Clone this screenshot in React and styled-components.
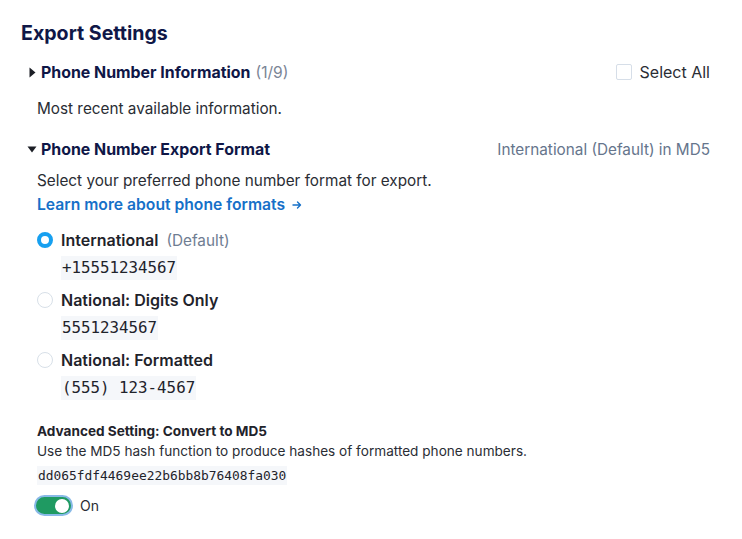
import React, { useState } from "react";
import styled, { createGlobalStyle, css } from "styled-components";

const Global = createGlobalStyle`
  html, body { margin: 0; padding: 0; background: #ffffff; }
  body { font-family: Inter, "Noto Sans", "Liberation Sans", sans-serif; color: #2a2d34; }
  * { box-sizing: border-box; }
`;

const Page = styled.div`
  width: 742px;
  padding: 21px 32px 20px 21px;
  display: flex;
  flex-direction: column;
`;

const Title = styled.h1`
  margin: 0;
  font-size: 19.6px;
  line-height: 24px;
  font-weight: 700;
  color: #0f1747;
`;

const SectionHeader = styled.div`
  display: flex;
  align-items: center;
  height: 24px;
  margin-top: ${(p) => p.$mt || 0}px;
`;

const Caret = styled.span`
  width: 20px;
  display: flex;
  align-items: center;
  justify-content: center;
  padding-left: 2px;
  color: #1c1f26;
`;

const HeaderTitle = styled.span`
  font-size: 15.9px;
  font-weight: 700;
  color: #0f1747;
`;

const Count = styled.span`
  font-size: 15.6px;
  color: #7b8596;
  margin-left: 5px;
`;

const Spacer = styled.div`
  flex: 1;
`;

const Meta = styled.span`
  font-size: 15.3px;
  color: #66758c;
`;

const CheckLabel = styled.label`
  display: flex;
  align-items: center;
  gap: 8px;
  font-size: 16px;
  color: #2a2d34;
`;

const CheckBox = styled.span`
  width: 16px;
  height: 16px;
  border: 1.5px solid #d6dee8;
  border-radius: 2px;
  background: #fff;
`;

const Body = styled.div`
  padding-left: 16px;
  display: flex;
  flex-direction: column;
  margin-top: ${(p) => p.$mt || 0}px;
`;

const Text = styled.p`
  margin: 0;
  font-size: 15.3px;
  line-height: 23px;
  color: #2a2d34;
`;

const LinkRow = styled.div`
  margin-top: 1px;
  line-height: 23px;
`;

const Link = styled.a`
  font-size: 15.7px;
  line-height: 23px;
  font-weight: 600;
  color: #1670c8;
  text-decoration: none;
  display: inline-flex;
  align-items: center;
  gap: 7px;
`;

const Options = styled.div`
  display: flex;
  flex-direction: column;
  gap: 8px;
  margin-top: 12px;
`;

const Option = styled.div`
  display: flex;
  flex-direction: column;
  gap: 4px;
`;

const OptionRow = styled.div`
  display: flex;
  align-items: center;
  height: 24px;
  gap: 8px;
`;

const Radio = styled.span`
  width: 16px;
  height: 16px;
  border-radius: 50%;
  flex: none;
  ${(p) =>
    p.$checked
      ? css`
          background: #fff;
          border: 4.5px solid #17a0f0;
        `
      : css`
          border: 1.5px solid #d8e0e8;
          background: #fff;
        `}
`;

const OptionLabel = styled.span`
  font-size: 16px;
  font-weight: 600;
  color: #1f232b;
`;

const Hint = styled.span`
  font-size: 15.3px;
  color: #6f7d92;
`;

const Code = styled.code`
  align-self: flex-start;
  margin-left: ${(p) => (p.$indent ? 24 : 0)}px;
  margin-top: ${(p) => p.$mt || 0}px;
  font-family: "DejaVu Sans Mono", "Liberation Mono", monospace;
  font-size: ${(p) => p.$size || 15.8}px;
  line-height: ${(p) => p.$lh || 24}px;
  background: #f5f7fa;
  padding: 0 1px;
  color: #1f232b;
`;

const Advanced = styled.div`
  display: flex;
  flex-direction: column;
  margin-top: 21px;
`;

const AdvTitle = styled.div`
  font-size: 13.6px;
  line-height: 20px;
  font-weight: 700;
  color: #1f232b;
`;

const AdvText = styled.div`
  font-size: 13.6px;
  line-height: 21px;
  color: #2a2d34;
`;

const ToggleRow = styled.div`
  display: flex;
  align-items: center;
  gap: 7px;
  margin-top: 10px;
`;

const Toggle = styled.button`
  position: relative;
  width: 39px;
  height: 21px;
  border-radius: 11px;
  border: 2.5px solid #88b9e7;
  background: #1f9a62;
  padding: 0;
  margin-left: -3px;
  cursor: pointer;
`;

const Knob = styled.span`
  position: absolute;
  top: 1.5px;
  right: 2px;
  width: 14px;
  height: 14px;
  border-radius: 50%;
  background: #fff;
`;

const ToggleLabel = styled.span`
  font-size: 14px;
  color: #2a2d34;
`;

const RightTri = () => (
  <svg width="7" height="11" viewBox="0 0 7 11">
    <path d="M0.5 0.5 L6.5 5.5 L0.5 10.5 Z" fill="currentColor" />
  </svg>
);
const DownTri = () => (
  <svg width="10" height="7" viewBox="0 0 10 7">
    <path d="M0.5 0.5 L9.5 0.5 L5 6.5 Z" fill="currentColor" />
  </svg>
);
const Arrow = () => (
  <svg width="10" height="10" viewBox="0 0 10 10">
    <path d="M1 5 H8.5 M5.5 2 L8.5 5 L5.5 8" fill="none" stroke="currentColor" strokeWidth="1.4" strokeLinecap="round" strokeLinejoin="round" />
  </svg>
);

const options = [
  { label: "International", hint: "(Default)", code: "+15551234567", checked: true },
  { label: "National: Digits Only", code: "5551234567" },
  { label: "National: Formatted", code: "(555) 123-4567" },
];

export default function App() {
  const [on, setOn] = useState(true);
  return (
    <Page>
      <Global />
      <Title>Export Settings</Title>

      <SectionHeader $mt={15}>
        <Caret><RightTri /></Caret>
        <HeaderTitle>Phone Number Information</HeaderTitle>
        <Count>(1/9)</Count>
        <Spacer />
        <CheckLabel>
          <CheckBox />
          Select All
        </CheckLabel>
      </SectionHeader>
      <Body $mt={13}>
        <Text>Most recent available information.</Text>
      </Body>

      <SectionHeader $mt={17}>
        <Caret><DownTri /></Caret>
        <HeaderTitle>Phone Number Export Format</HeaderTitle>
        <Spacer />
        <Meta>International (Default) in MD5</Meta>
      </SectionHeader>
      <Body $mt={8}>
        <Text>Select your preferred phone number format for export.</Text>
        <LinkRow>
          <Link href="#">Learn more about phone formats <Arrow /></Link>
        </LinkRow>
        <Options>
          {options.map((o) => (
            <Option key={o.label}>
              <OptionRow>
                <Radio $checked={o.checked} />
                <OptionLabel>{o.label}</OptionLabel>
                {o.hint && <Hint>{o.hint}</Hint>}
              </OptionRow>
              <Code $indent>{o.code}</Code>
            </Option>
          ))}
        </Options>
        <Advanced>
          <AdvTitle>Advanced Setting: Convert to MD5</AdvTitle>
          <AdvText>Use the MD5 hash function to produce hashes of formatted phone numbers.</AdvText>
          <Code $size={12.9} $lh={19} $mt={4}>dd065fdf4469ee22b6bb8b76408fa030</Code>
          <ToggleRow>
            <Toggle onClick={() => setOn(!on)} aria-pressed={on}>
              <Knob />
            </Toggle>
            <ToggleLabel>On</ToggleLabel>
          </ToggleRow>
        </Advanced>
      </Body>
    </Page>
  );
}
